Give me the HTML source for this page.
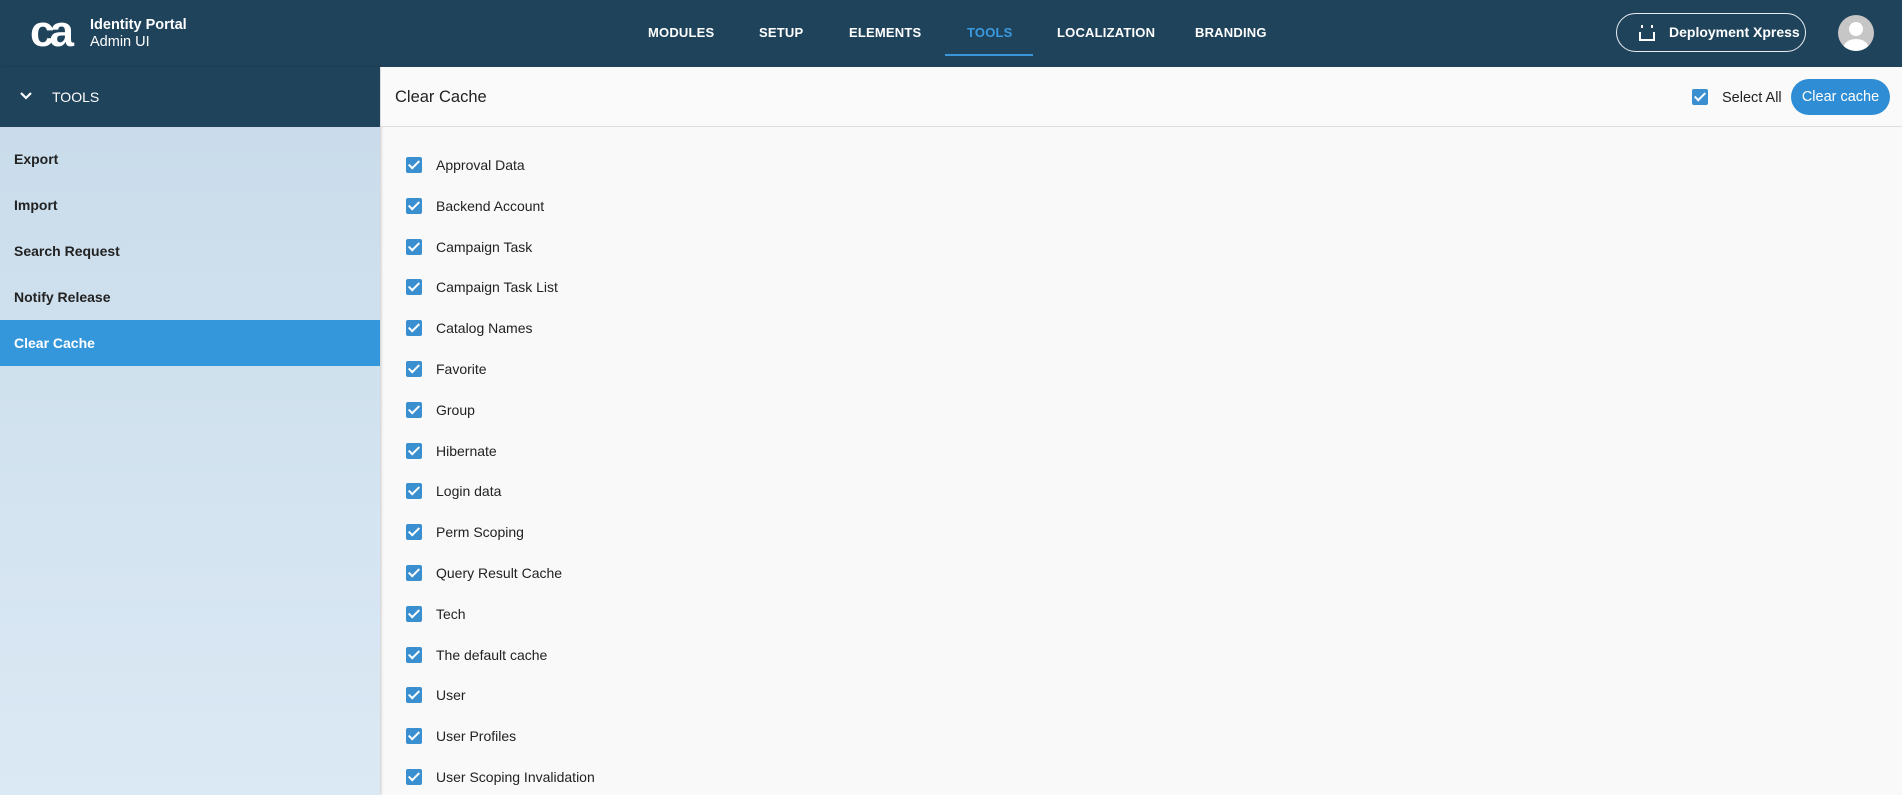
<!DOCTYPE html>
<html><head><style>
*{margin:0;padding:0;box-sizing:border-box}
body{width:1902px;height:795px;overflow:hidden;background:#f9f9f9;font-family:"Liberation Sans",Arial,sans-serif;position:relative}
.hdr{position:absolute;left:0;top:0;width:1902px;height:67px;background:#20435c}
.logo{position:absolute;left:30px;top:12px;color:#fff;font-weight:bold;font-size:44px;letter-spacing:-5px;line-height:40px}
.brand{position:absolute;left:90px;top:17px;color:#fff;font-size:14.5px;line-height:17px}
.brand b{font-weight:bold}
.nav{position:absolute;top:25px;color:#fff;font-size:13px;font-weight:bold;letter-spacing:.2px;white-space:nowrap}
.ul{position:absolute;left:945px;top:54px;width:88px;height:2px;background:#3897db}
.dep{position:absolute;left:1616px;top:13px;width:190px;height:39px;border:1.5px solid #e8edf1;border-radius:20px;color:#fff;font-weight:bold;font-size:14px;line-height:36px;padding-left:52px;white-space:nowrap}
.av{position:absolute;left:1838px;top:15px;width:36px;height:36px;border-radius:50%;background:#c6c6c6;overflow:hidden}
.side{position:absolute;left:0;top:67px;width:380px;height:728px;background:linear-gradient(#c8dbea,#dbe9f4);box-shadow:1px 0 3px rgba(0,0,0,.2)}
.sh{position:absolute;left:0;top:0;width:380px;height:60px;background:#20435c;color:#fff;font-size:14px}
.si{position:absolute;left:14px;font-size:14px;font-weight:bold;color:#222}
.act{position:absolute;left:0;top:253px;width:380px;height:46px;background:#3597db}
.bar{position:absolute;left:381px;top:67px;width:1521px;height:60px;border-bottom:1px solid #ddd;background:#fafafa}
.cb{position:absolute;width:16px;height:16px;background:#3a8fd0;border-radius:2px}
.cb:after{content:"";position:absolute;left:5px;top:1px;width:4px;height:9px;border:solid #fff;border-width:0 2px 2px 0;transform:rotate(45deg)}
.it{position:absolute;left:436px;font-size:14px;color:#222}
.btn{position:absolute;left:1791px;top:79px;width:99px;height:36px;border-radius:18px;background:#2e8dd4;color:#fff;font-size:14.5px;line-height:36px;text-align:center;white-space:nowrap}
</style></head><body>
<div class="hdr">
<div class="logo">ca</div>
<div class="brand"><b>Identity Portal</b><br>Admin UI</div>
<div class="nav" style="left:648px">MODULES</div>
<div class="nav" style="left:759px">SETUP</div>
<div class="nav" style="left:849px">ELEMENTS</div>
<div class="nav" style="left:967px;color:#3a9ae0">TOOLS</div>
<div class="nav" style="left:1057px">LOCALIZATION</div>
<div class="nav" style="left:1195px">BRANDING</div>
<div class="ul"></div>
<div class="dep"><svg style="position:absolute;left:21px;top:10px" width="18" height="18" viewBox="0 0 18 18" fill="none" stroke="#fff" stroke-width="2"><path d="M2 8v8h14V8"/><path d="M4 1v3M14 1v3"/></svg>Deployment Xpress</div>
<div class="av"><svg width="36" height="36"><circle cx="18" cy="14" r="7" fill="#fff"/><ellipse cx="18" cy="34" rx="13" ry="10" fill="#fff"/></svg></div>
</div>
<div class="side">
<div class="sh"><svg style="position:absolute;left:20px;top:24px" width="12" height="10" viewBox="0 0 12 10"><path d="M1 2l5 5 5-5" stroke="#fff" stroke-width="2.2" fill="none"/></svg><span style="position:absolute;left:52px;top:22px">TOOLS</span></div>
<div class="si" style="top:84px">Export</div>
<div class="si" style="top:130px">Import</div>
<div class="si" style="top:176px">Search Request</div>
<div class="si" style="top:222px">Notify Release</div>
<div class="act"></div>
<div class="si" style="top:268px;color:#fff">Clear Cache</div>
</div>
<div class="bar"><span style="position:absolute;left:14px;top:21px;font-size:16.5px;color:#222">Clear Cache</span></div>
<div class="cb" style="left:1692px;top:89px"></div>
<div style="position:absolute;left:1722px;top:90px;font-size:14.5px;color:#222">Select All</div>
<div class="btn">Clear cache</div>
<div id="list"></div>
<script>
var n=["Approval Data","Backend Account","Campaign Task","Campaign Task List","Catalog Names","Favorite","Group","Hibernate","Login data","Perm Scoping","Query Result Cache","Tech","The default cache","User","User Profiles","User Scoping Invalidation"],h="";
n.forEach(function(t,i){var y=157+i*40.8;h+='<div class="cb" style="left:406px;top:'+y+'px"></div><div class="it" style="top:'+(y)+'px">'+t+'</div>';});
document.getElementById("list").innerHTML=h;
</script>
</body></html>
